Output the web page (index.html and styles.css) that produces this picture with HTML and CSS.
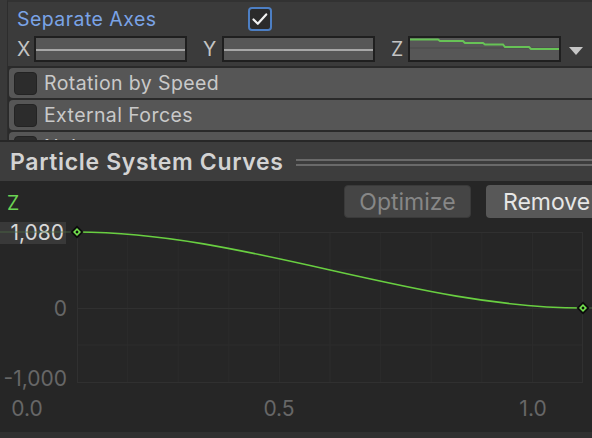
FILE: index.html
```html
<!DOCTYPE html>
<html>
<head>
<meta charset="utf-8">
<link rel="stylesheet" href="styles.css">
</head>
<body>
<div class="panel">
  <div class="axes">
    <div class="row-sep">
      <span class="sep-label">Separate Axes</span>
      <span class="toggle">
        <svg width="20" height="20" viewBox="0 0 20 20"><path d="M3.5 10.5 L7.8 14.8 L16.2 5.4" fill="none" stroke="#f2f2f2" stroke-width="2.2" stroke-linecap="round" stroke-linejoin="round"/></svg>
      </span>
    </div>
    <div class="vec">
      <div class="comp"><span class="ax ax-x">X</span><div class="field"><div class="mid"></div></div></div>
      <div class="comp"><span class="ax ax-y">Y</span><div class="field"><div class="mid"></div></div></div>
      <div class="comp"><span class="ax ax-z">Z</span><div class="field field-curve">
        <svg width="149" height="22" viewBox="0 0 149 22"><line x1="0" y1="10" x2="149" y2="10" stroke="#4b4b4b" stroke-width="1"/><path d="M0 1.5 H28 L30 3 H53 L55 5 H73 L75 6.5 H93 L95 9 H119 L121 11 H149" fill="none" stroke="#67c356" stroke-width="2"/></svg>
      </div></div>
      <span class="drop"></span>
    </div>
  </div>
  <div class="modules">
    <div class="module"><span class="mcb"></span><span class="mname">Rotation by Speed</span></div>
    <div class="module"><span class="mcb"></span><span class="mname">External Forces</span></div>
    <div class="module"><span class="mcb"></span><span class="mname">Noise</span></div>
  </div>
</div>
<div class="header">
  <span class="title">Particle System Curves</span>
  <div class="grip"></div>
</div>
<div class="curves">
  <div class="toolbar">
    <span class="zlabel">Z</span>
    <span class="btn btn-off">Optimize</span>
    <span class="btn btn-on">Remove</span>
  </div>
  <svg class="plot" width="592" height="210" viewBox="0 222 592 210">
    <g stroke="#2c2c2c" stroke-width="1">
      <line x1="127.6" y1="232" x2="127.6" y2="382"/>
      <line x1="178.2" y1="232" x2="178.2" y2="382"/>
      <line x1="228.8" y1="232" x2="228.8" y2="382"/>
      <line x1="279.4" y1="232" x2="279.4" y2="382"/>
      <line x1="330" y1="232" x2="330" y2="382"/>
      <line x1="380.6" y1="232" x2="380.6" y2="382"/>
      <line x1="431.2" y1="232" x2="431.2" y2="382"/>
      <line x1="481.8" y1="232" x2="481.8" y2="382"/>
      <line x1="532.4" y1="232" x2="532.4" y2="382"/>
      <line x1="77" y1="270" x2="583" y2="270"/>
      <line x1="77" y1="345" x2="583" y2="345"/>
    </g>
    <g stroke="#303030" stroke-width="1">
      <line x1="77.5" y1="232" x2="77.5" y2="382.5"/>
      <line x1="582.5" y1="232" x2="582.5" y2="382.5"/>
      <line x1="77" y1="232.5" x2="583" y2="232.5"/>
      <line x1="77" y1="308.5" x2="583" y2="308.5"/>
      <line x1="77" y1="382.5" x2="583" y2="382.5"/>
    </g>
    <g class="lbl" fill="#676767" font-size="21">
      <text x="67" y="316" text-anchor="end">0</text>
      <text x="67" y="386" text-anchor="end">-1,000</text>
      <text x="27" y="416" text-anchor="middle">0.0</text>
      <text x="279" y="416" text-anchor="middle">0.5</text>
      <text x="533" y="416" text-anchor="middle">1.0</text>
    </g>
    <rect x="0" y="222" width="66" height="22" fill="#393939"/>
    <text class="lbl" x="64" y="240" text-anchor="end" fill="#d8d8d8" font-size="21">1,080</text>
    <line x1="0" y1="232" x2="72" y2="232" stroke="#4c6a44" stroke-width="1" opacity="0.8"/>
    <line x1="588" y1="308" x2="592" y2="308" stroke="#4c6a44" stroke-width="1"/>
    <path d="M77 232 C245.7 232 414.3 308 583 308" fill="none" stroke="#69cf41" stroke-width="1.6"/>
    <g>
      <polygon points="77,225.5 83.5,232 77,238.5 70.5,232" fill="#0c0c0c"/>
      <polygon points="77,228 81,232 77,236 73,232" fill="#74e24e"/>
      <rect x="75.8" y="230.8" width="2.4" height="2.4" fill="#0c0c0c" transform="rotate(45 77 232)"/>
      <polygon points="583,301.5 589.5,308 583,314.5 576.5,308" fill="#0c0c0c"/>
      <polygon points="583,304 587,308 583,312 579,308" fill="#74e24e"/>
      <rect x="581.8" y="306.8" width="2.4" height="2.4" fill="#0c0c0c" transform="rotate(45 583 308)"/>
    </g>
  </svg>
</div>
<div class="footer"></div>
</body>
</html>
```

FILE: styles.css
```css
html, body {
  margin: 0;
  padding: 0;
}
body {
  width: 592px;
  height: 438px;
  overflow: hidden;
  background: #393939;
  font-family: Inter, "Noto Sans", "Liberation Sans", sans-serif;
}
.panel {
  margin-left: 7px;
  border-left: 1px solid #2d2d2d;
  border-top: 2px solid #323232;
}
.axes {
  background: #3b3b3b;
  height: 64px;
  padding-left: 9px;
  box-sizing: border-box;
}
.row-sep {
  display: flex;
  align-items: center;
  height: 34px;
}
.sep-label {
  width: 231px;
  color: #7aa3e6;
  font-size: 19.5px;
  letter-spacing: 0.45px;
}
.toggle {
  width: 24px;
  height: 24px;
  box-sizing: border-box;
  border: 2px solid #4d7fc4;
  border-radius: 4px;
  background: #2b2b2b;
  display: flex;
  align-items: center;
  justify-content: center;
}
.vec {
  display: flex;
  align-items: center;
  height: 26px;
}
.comp {
  display: flex;
  align-items: center;
}
.comp + .comp {
  margin-left: 16px;
}
.ax {
  color: #c4c4c4;
  font-size: 19.5px;
}
.ax-x { width: 17px; }
.ax-y { width: 19px; }
.ax-z { width: 17px; }
.field {
  width: 153px;
  height: 26px;
  box-sizing: border-box;
  border: 2px solid #1f1f1f;
  background: #575757;
  display: flex;
  align-items: center;
}
.field-curve {
  align-items: stretch;
}
.field-curve svg {
  display: block;
}
.mid {
  width: 100%;
  height: 2px;
  margin-top: 1px;
  background: #a7a7a7;
}
.drop {
  margin-left: 8px;
  margin-top: 3px;
  width: 0;
  height: 0;
  border-left: 7px solid transparent;
  border-right: 7px solid transparent;
  border-top: 8px solid #c6c6c6;
}
.modules {
  height: 74px;
  overflow: hidden;
  background: #2a2a2a;
  padding-top: 2px;
  box-sizing: border-box;
  display: flex;
  flex-direction: column;
  gap: 2px;
}
.module {
  flex: none;
  height: 30px;
  margin-left: 1px;
  background: #565656;
  border-radius: 4px 0 0 4px;
  display: flex;
  align-items: center;
  padding-left: 5px;
}
.mcb {
  width: 23px;
  height: 23px;
  box-sizing: border-box;
  border: 1px solid #232323;
  border-radius: 4px;
  background: #2c2c2c;
}
.mname {
  margin-left: 7px;
  color: #c9c9c9;
  font-size: 19.5px;
  letter-spacing: 0.4px;
}
.header {
  height: 39px;
  background: #3d3d3d;
  border-top: 2px solid #272727;
  display: flex;
  align-items: center;
}
.title {
  margin-left: 10px;
  color: #d3d3d3;
  font-size: 23px;
  font-weight: 600;
  letter-spacing: 0.65px;
}
.grip {
  flex: 1;
  margin-left: 12px;
  height: 3px;
  border-top: 2px solid #6a6a6a;
  border-bottom: 2px solid #6a6a6a;
  margin-top: 1px;
}
.curves {
  height: 251px;
  background: #262626;
  overflow: hidden;
}
.toolbar {
  display: flex;
  align-items: center;
  height: 41px;
  width: 640px;
  padding-left: 7px;
  box-sizing: border-box;
}
.zlabel {
  color: #6bd353;
  font-size: 19.5px;
  margin-top: 2px;
  width: 330px;
}
.btn {
  width: 127px;
  height: 33px;
  box-sizing: border-box;
  border-radius: 4px;
  font-size: 23px;
  display: flex;
  align-items: center;
  justify-content: center;
}
.btn-off {
  margin-left: 7px;
  background: #454545;
  color: #878787;
  border: 1px solid #3a3a3a;
}
.btn-on {
  margin-left: 15px;
  background: #585858;
  color: #e6e6e6;
  justify-content: flex-start;
  padding-left: 17px;
}
.plot {
  display: block;
}
.lbl {
  font-family: Inter, "Noto Sans", "Liberation Sans", sans-serif;
}
.footer {
  height: 6px;
  background: #303030;
}
```
